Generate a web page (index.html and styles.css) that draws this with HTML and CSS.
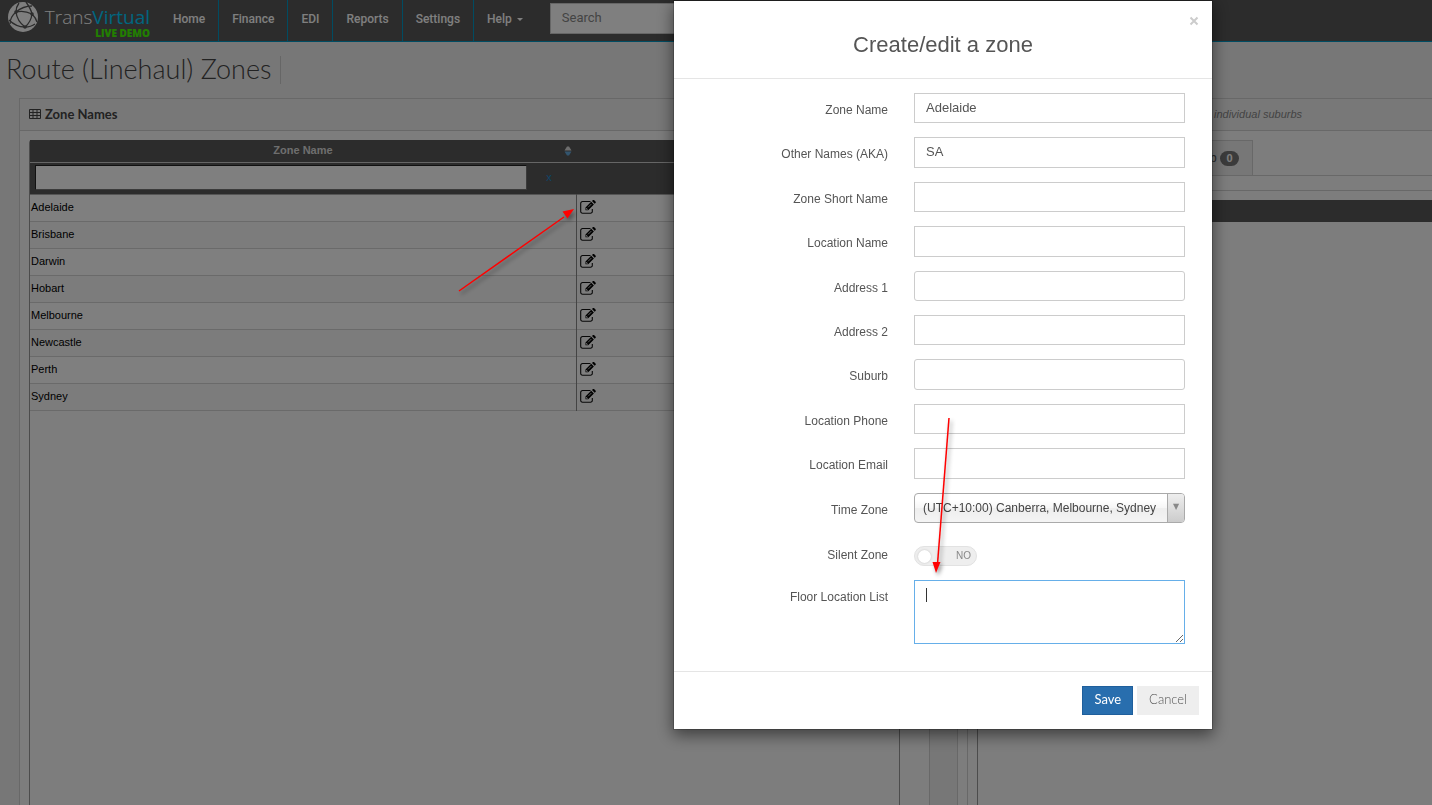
FILE: index.html
```
<!DOCTYPE html>
<html lang="en">
<head>
<meta charset="utf-8">
<title>Route (Linehaul) Zones</title>
<link rel="stylesheet" href="styles.css">
</head>
<body>
<svg class="sprite" aria-hidden="true">
  <symbol id="edit" viewBox="0 0 16 14">
    <path d="M10.500 1.500H2.500A1.800 1.800 0 0 0 .7 3.300v8A1.800 1.800 0 0 0 2.500 13.200h8a1.800 1.800 0 0 0 1.800-1.800V9" fill="none" stroke="#111" stroke-width="1.100"/>
    <path d="M5.500 10.200V7.500L11.200 1.800l2.700 2.700-5.700 5.700zM12 1l1-.9q.5-.3 1 0L15.700 1.800q.3.500 0 1L14.700 3.700z"/>
    <path d="M6.500 8v1.300h1.400M8 7.400L11.400 4" fill="none" stroke="#eee" stroke-width=".8"/>
  </symbol>
</svg>
<div class="page">
  <header class="nav">
    <a class="logo" href="#" aria-label="TransVirtual live demo">
      <svg class="globe" viewBox="0 0 32 32">
        <circle cx="16" cy="16" r="15" fill="#fff"/>
        <g fill="none" stroke="#585858" stroke-width="1.300">
          <path d="M9 11Q16 5 25 5M9 11Q3 16 3 23M9 11Q10 20 18 26M9 11Q17 9 25 13M25 13Q24 21 18 26M25 13Q24 8 19 1M25 13Q29 17 30 21M2 19Q9 26 18 26M18 26Q24 26 28 23M9 11Q9 6 12 2"/>
        </g>
        <g fill="#585858"><circle cx="9" cy="11" r="1.800"/><circle cx="25" cy="13" r="1.800"/><circle cx="18" cy="26" r="1.800"/></g>
      </svg>
      <span class="brand"><span class="name">Trans<b>Virtual</b></span><span class="demo">LIVE DEMO</span></span>
    </a>
    <nav class="menu">
      <a href="#">Home</a><a href="#">Finance</a><a href="#">EDI</a><a href="#">Reports</a><a href="#">Settings</a><a href="#" class="help">Help <i class="caret"></i></a>
    </nav>
    <input class="search" type="search" placeholder="Search" aria-label="Search">
  </header>
  <h1>Route (Linehaul) Zones</h1>
  <main class="columns">
    <section class="panel">
      <h2><svg class="grid-icon" viewBox="0 0 12 10"><path d="M.5.500h11v9H.500zM.500 3.500h11M.500 6.500h11M4 .500v9M8 .500v9" fill="none" stroke="#444"/></svg>Zone Names</h2>
      <div class="panel-body">
        <div class="table-wrap">
        <table class="zones">
          <colgroup><col class="wide"><col></colgroup>
          <thead>
            <tr><th scope="col"><span class="sort-head">Zone Name<svg class="sort" viewBox="0 0 8 10"><path d="M.5 4.500L3 .500h2L7.500 4.500z" fill="#ddd"/><path d="M.5 5.500L3 9.500h2L7.500 5.500z" fill="#6ad"/></svg></span></th><th></th></tr>
            <tr><td><span class="filter"><input type="text" aria-label="Filter zone name"><button type="button">x</button></span></td><td></td></tr>
          </thead>
          <tbody>
            <tr><td>Adelaide</td><td><button type="button" aria-label="Edit Adelaide"><svg><use href="#edit"/></svg></button></td></tr>
            <tr><td>Brisbane</td><td><button type="button" aria-label="Edit Brisbane"><svg><use href="#edit"/></svg></button></td></tr>
            <tr><td>Darwin</td><td><button type="button" aria-label="Edit Darwin"><svg><use href="#edit"/></svg></button></td></tr>
            <tr><td>Hobart</td><td><button type="button" aria-label="Edit Hobart"><svg><use href="#edit"/></svg></button></td></tr>
            <tr><td>Melbourne</td><td><button type="button" aria-label="Edit Melbourne"><svg><use href="#edit"/></svg></button></td></tr>
            <tr><td>Newcastle</td><td><button type="button" aria-label="Edit Newcastle"><svg><use href="#edit"/></svg></button></td></tr>
            <tr><td>Perth</td><td><button type="button" aria-label="Edit Perth"><svg><use href="#edit"/></svg></button></td></tr>
            <tr><td>Sydney</td><td><button type="button" aria-label="Edit Sydney"><svg><use href="#edit"/></svg></button></td></tr>
          </tbody>
        </table>
        </div>
      </div>
    </section>
    <section class="panel side">
      <h2><em>individual suburbs</em></h2>
      <div class="tabs"><a href="#">b <span class="badge">0</span></a></div>
      <div class="tab-body"><div class="list"></div></div>
    </section>
  </main>
</div>
<div class="backdrop">
  <form class="modal" role="dialog" aria-labelledby="title">
    <div class="modal-head">
      <button type="button" class="close" aria-label="Close"><svg viewBox="0 0 10 10"><path d="M1.500 1.500l7 7M8.500 1.500l-7 7" stroke="#ccc" stroke-width="2"/></svg></button>
      <h3 id="title">Create/edit a zone</h3>
    </div>
    <div class="modal-body">
      <div class="fields">
        <label for="f1">Zone Name</label><input id="f1" type="text" value="Adelaide">
        <label for="f2">Other Names (AKA)</label><input id="f2" type="text" value="SA">
        <label for="f3">Zone Short Name</label><input id="f3" type="text">
        <label for="f4">Location Name</label><input id="f4" type="text">
        <label for="f5">Address 1</label><input id="f5" class="round" type="text">
        <label for="f6">Address 2</label><input id="f6" type="text">
        <label for="f7">Suburb</label><input id="f7" class="round" type="text">
        <label for="f8">Location Phone</label><input id="f8" type="text">
        <label for="f9">Location Email</label><input id="f9" type="text">
        <label for="f10">Time Zone</label><div class="select"><select id="f10"><option>(UTC+10:00) Canberra, Melbourne, Sydney</option></select></div>
      </div>
      <div class="fields last">
        <label for="f11">Silent Zone</label><div class="toggle"><input id="f11" type="checkbox" role="switch"><span>NO</span></div>
        <label for="f12">Floor Location List</label><div class="area"><textarea id="f12"></textarea><i class="text-caret"></i></div>
      </div>
    </div>
    <div class="modal-foot"><button type="submit" class="save">Save</button><button type="button" class="cancel">Cancel</button></div>
  </form>
</div>
<svg class="arrow edit-arrow" viewBox="0 0 124 92"><path d="M4 86L109 12" stroke="red" stroke-width="1.500"/><path d="M119 4l-6.500 9.500-5-7z" fill="red"/></svg>
<svg class="arrow floor-arrow" viewBox="0 0 30 166"><path d="M18 4L6.500 150" stroke="red" stroke-width="1.500"/><path d="M5 159L1.500 148h8z" fill="red"/></svg>
</body>
</html>
```
FILE: styles.css
```
* { box-sizing: border-box; }
body { margin: 0; overflow: hidden; font: 12px/18px "Liberation Sans", Arial, sans-serif; color: #555; }
button, input, select, textarea { font: inherit; color: inherit; margin: 0; }
a { color: inherit; text-decoration: none; }
.sprite { display: none; }
.page { height: 100vh; display: flex; flex-direction: column; background: #efefef; }

.nav { display: flex; height: 42px; flex: none; background: #585858; border-bottom: 1px solid #0098c4; color: #fff; font: 500 12px/18px Roboto, sans-serif; }
.logo { display: flex; padding-left: 7px; width: 160px; flex: none; }
.globe { width: 32px; height: 32px; margin-top: 1px; flex: none; }
.brand { display: flex; flex-direction: column; align-items: flex-end; width: 111px; }
.name { font: 300 19px/22px "Open Sans", sans-serif; margin-top: 6px; }
.name b { font-weight: 400; color: #0cf; }
.demo { font: 800 10px/10px "Open Sans", sans-serif; color: #4f0; }
.menu { display: flex; }
.menu a { padding: 10px 13px 0; border-right: 1px solid #0098c4; }
.menu .help { border: 0; }
.caret { display: inline-block; margin-left: 2px; vertical-align: 2px; border: 3px solid transparent; border-top-color: #fff; border-bottom: 0; }
.search { margin: 3px 0 0 14px; width: 240px; height: 31px; padding: 0 11px 2px; border: 1px solid #ccc; background: #fff; font: 400 13px/18px Roboto, sans-serif; }
.search::placeholder { color: #888; opacity: 1; }

h1 { align-self: flex-start; margin: 14px 0; padding: 0 8px 2px 6px; border-right: 1px solid #ccc; font: 300 27px/26px Lato, sans-serif; color: #444; }
.columns { flex: 1; display: grid; grid-template-columns: 911fr 475fr; gap: 27px; padding-left: 19px; }
.panel { border: 1px solid #d0d0d0; border-bottom: 0; background: #fafafa; }
h2 { display: flex; align-items: center; height: 32px; margin: 0; padding: 0 9px 2px; border-bottom: 1px solid #d0d0d0; background: #f1f1f1; font: 700 13px/18px Lato, sans-serif; color: #444; }
.grid-icon { width: 12px; height: 10px; margin-right: 4px; }
.panel-body { display: flex; height: calc(100% - 32px); padding: 9px 29px 0 9px; }
.table-wrap { flex: 1; border: 1px solid #999; border-width: 0 1px; border-radius: 3px 3px 0 0; }
.zones { width: 100%; border-collapse: collapse; table-layout: fixed; font-size: 11px; line-height: 16px; color: #000; }
.wide { width: 546px; }
.zones td, .zones th { padding: 0 0 2px; }
.zones thead { background: #585858; color: #ddd; }
.zones thead tr:first-child { height: 22px; border-bottom: 1px solid #ccc; }
.zones thead tr:last-child { height: 32px; border-bottom: 1px solid #aaa; }
.sort-head { position: relative; display: block; }
.sort { position: absolute; top: 4px; right: 4px; width: 8px; height: 10px; }
.filter { display: flex; align-items: center; padding-left: 5px; }
.filter input { width: 492px; height: 25px; border: 1px solid #777; border-top-color: #222; border-left-color: #222; background: #fff; }
.filter button { width: 44px; padding: 0; border: 0; background: none; color: #28c; }
.zones tbody tr { height: 27px; background: #fff; border-bottom: 1px solid #d4d4d4; }
.zones tbody tr:nth-child(even) { background: #f8f8f8; }
.zones tbody td + td { border-left: 1px solid #888; }
.zones tbody td:first-child { padding-left: 1px; }
.zones tbody button { display: block; padding: 0 0 0 3px; border: 0; background: none; }
.zones tbody svg { display: block; width: 16px; height: 14px; }
.side { border-right: 0; }
.side h2 { padding-left: 256px; }
.side em { font: italic 11px/16px "Liberation Sans", sans-serif; color: #888; }
.tabs { display: flex; margin: 9px 0 0 9px; padding-left: 234px; border-bottom: 1px solid #d0d0d0; }
.tabs a { padding: 8px 13px 8px 8px; border: 1px solid #d0d0d0; border-bottom: 0; background: #efefef; }
.badge { display: inline-block; width: 19px; border-radius: 8px; background: #777; color: #fff; font: 700 11px/15px "Liberation Sans", sans-serif; text-align: center; }
.tab-body { height: calc(100% - 91px); margin: 14px 0 0 9px; padding: 9px 0 0 9px; border: 1px solid #d0d0d0; border-width: 1px 0 0 1px; }
.list { height: 100%; border-left: 1px solid #999; border-top: 22px solid #585858; }

.backdrop { position: fixed; inset: 0; display: flex; justify-content: flex-end; align-items: flex-start; padding-right: 219px; background: rgba(0,0,0,.5); }
.modal { width: 540px; background: #fff; background-clip: padding-box; border: 1px solid rgba(0,0,0,.2); box-shadow: 0 5px 15px rgba(0,0,0,.5); }
.modal-head { position: relative; padding: 29px 15px 19px; border-bottom: 1px solid #e5e5e5; }
h3 { margin: 0; font: 400 22px/29px "Liberation Sans", sans-serif; text-align: center; }
.close { position: absolute; top: 15px; right: 13px; padding: 0; border: 0; background: none; }
.close svg { display: block; width: 10px; height: 10px; }
.modal-body { padding: 14px 27px 27px 15px; }
.fields { display: grid; grid-template-columns: 1fr 271px; column-gap: 26px; row-gap: 14px; grid-auto-rows: 1fr; min-height: 430px; }
.fields label { text-align: right; padding-top: 8px; }
.fields input[type=text] { width: 100%; min-width: 0; border: 1px solid #ccc; padding: 4px 11px 5px; font-size: 13px; background: #fff; }
.fields .round { border-radius: 3px; }
.select { position: relative; display: grid; }
.select select { appearance: none; border: 1px solid #aaa; border-radius: 4px; padding: 0 8px; background: linear-gradient(#fff 20%, #f6f6f6 50%, #eee 52%, #f4f4f4 100%); color: #444; }
.select::after { content: "▼"; position: absolute; top: 1px; right: 1px; bottom: 1px; width: 16px; border-left: 1px solid #aaa; border-radius: 0 3px 3px 0; background: linear-gradient(#eee, #ccc); color: #888; font: 8px/26px "DejaVu Sans", sans-serif; text-align: center; pointer-events: none; }
.last { grid-auto-rows: auto; min-height: 0; margin-top: 23px; row-gap: 14px; }
.last label { padding-top: 0; }
.last label:nth-of-type(2) { padding-top: 8px; }
.toggle { position: relative; width: 63px; height: 20px; border: 1px solid #e2e2e2; border-radius: 10px; background: #eee; }
.toggle input { appearance: none; display: block; width: 13px; height: 13px; margin: 3px; border-radius: 50%; background: #fff; box-shadow: 0 0 2px #bbb; }
.toggle span { position: absolute; top: 0; right: 5px; font-size: 10px; line-height: 18px; color: #888; }
.area { position: relative; }
textarea { display: block; width: 100%; height: 64px; padding: 5px 11px; border: 1px solid #66afe9; border-radius: 0; outline: 0; background: #fff; resize: vertical; }
.text-caret { position: absolute; top: 8px; left: 12px; width: 1px; height: 14px; background: #333; }
.modal-foot { display: flex; justify-content: flex-end; gap: 4px; padding: 14px 13px; border-top: 1px solid #e5e5e5; }
.modal-foot button { height: 29px; padding: 0 11px 3px; border: 1px solid #eee; background: #eee; font: 300 13px/18px Lato, sans-serif; }
.modal-foot .save { background: #286eae; border-color: #1f5f9c; color: #fff; font-weight: 400; }
.arrow { position: fixed; fill: none; filter: drop-shadow(2px 3px 2px rgba(0,0,0,.4)); }
.edit-arrow { left: 455px; top: 205px; width: 124px; height: 92px; }
.floor-arrow { left: 931px; top: 414px; width: 30px; height: 166px; }
```
